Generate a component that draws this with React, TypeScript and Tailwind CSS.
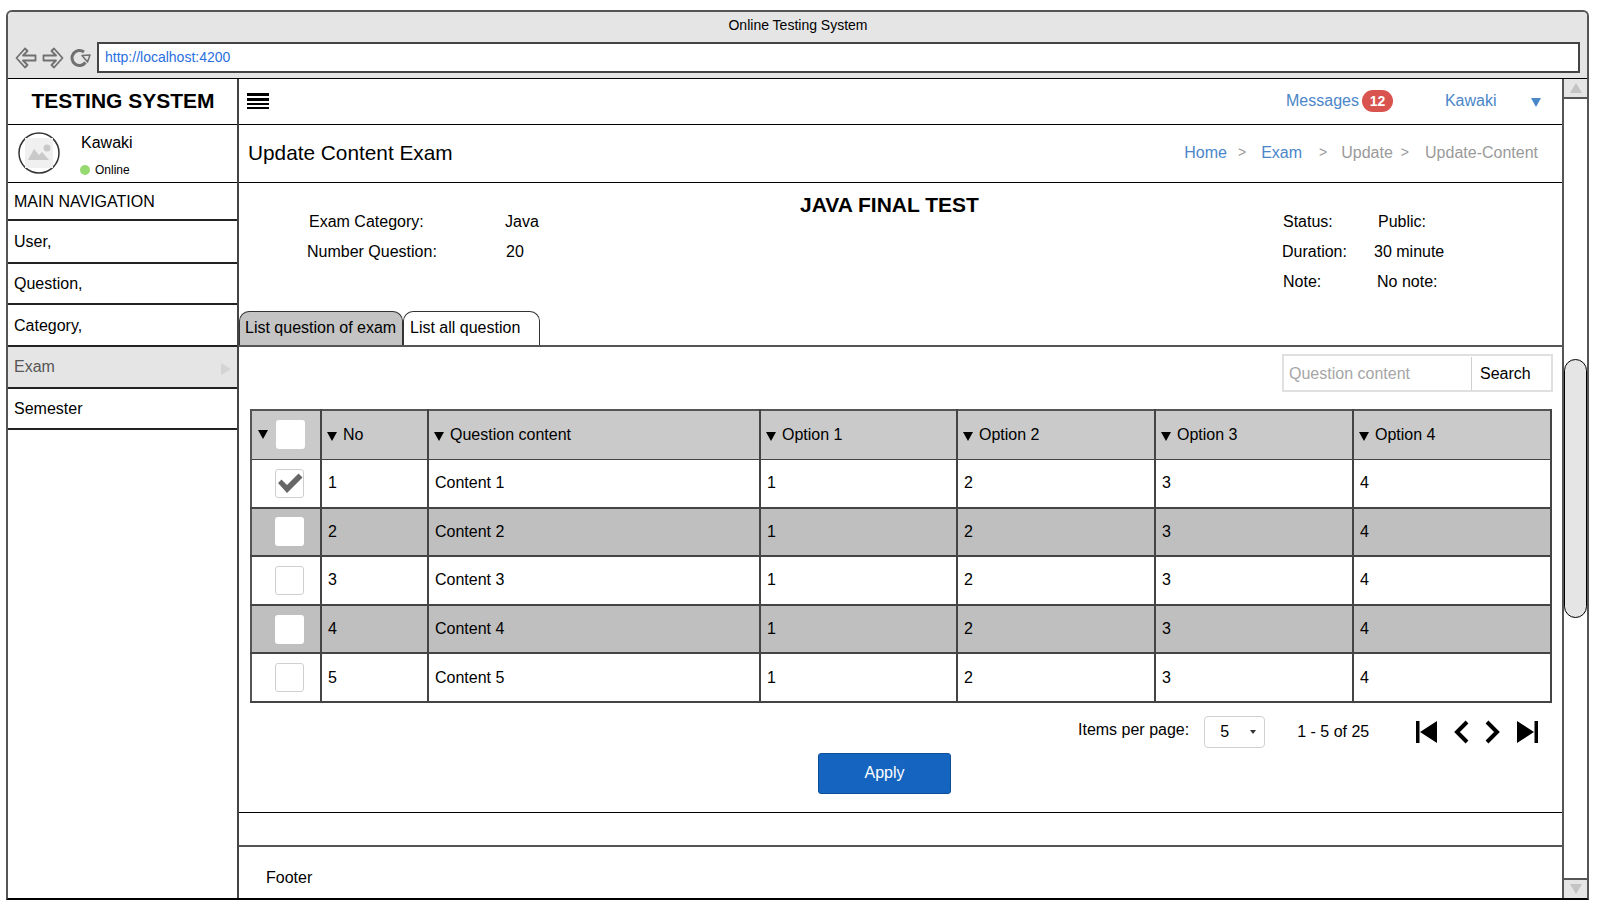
import React from 'react';

const sideItems = [
  { label: 'User,', h: 'h-[43px]' },
  { label: 'Question,', h: 'h-[41px]' },
  { label: 'Category,', h: 'h-[42px]' },
];
const rows = [1, 2, 3, 4, 5];
const headers = ['No', 'Question content', 'Option 1', 'Option 2', 'Option 3', 'Option 4'];

function Arrow({ flip }: { flip?: boolean }) {
  return (
    <svg width="22" height="22" viewBox="0 0 22 22" className={flip ? 'rotate-180' : ''}>
      <path d="M10 1.5 L1.5 11 L10 20.5 L12.5 18 L8 13.5 L20.5 13.5 L20.5 8.5 L8 8.5 L12.5 4 Z" fill="#e5e5e5" stroke="#707070" strokeWidth="1.8" strokeLinejoin="round" />
    </svg>
  );
}

function Caret() {
  return <span className="inline-block mr-[6px] w-0 h-0 border-x-[5px] border-x-transparent border-t-[9px] border-t-black align-[-1px]" />;
}

function CheckBox({ checked, bare }: { checked?: boolean; bare?: boolean }) {
  return (
    <span className={`flex items-center justify-center w-[29px] h-[29px] rounded-[3px] bg-white ${bare ? '' : 'border border-[#cfcfcf]'}`}>
      {checked && (
        <svg width="26" height="22" viewBox="0 0 26 22" className="shrink-0">
          <path d="M1 11 L4.5 7.5 L10 13 L21.5 1.5 L25.5 5.5 L10 21 Z" fill="#666" />
        </svg>
      )}
    </span>
  );
}

export default function App() {
  return (
    <div className="w-[1603px] h-[909px] bg-white pt-[10px] pl-[6px] overflow-hidden text-[16px] text-black [font-family:'Liberation_Sans',Arial,sans-serif]">
      <div className="w-[1583px] h-[890px] flex flex-col border-x-2 border-t-2 border-b-2 border-x-[#555] border-t-[#555] border-b-black rounded-t-[6px]">
        {/* browser chrome */}
        <div className="h-[66px] shrink-0 bg-[#e5e5e5] rounded-t-[5px] flex flex-col">
          <div className="h-[30px] flex items-center justify-center text-[14px] pb-[4px] pl-[1px]">Online Testing System</div>
          <div className="flex items-center pl-[7px] pr-[7px]">
            <div className="flex items-center gap-[5px] w-[82px]">
              <Arrow />
              <Arrow flip />
              <svg width="22" height="22" viewBox="0 0 22 22">
                <path d="M16.5 15.5 A7.5 7.5 0 1 1 15 5" fill="none" stroke="#707070" strokeWidth="3" />
                <path d="M13 8.5 L21 8 L18.5 15 Z" fill="#e5e5e5" stroke="#707070" strokeWidth="1.5" strokeLinejoin="round" />
              </svg>
            </div>
            <div className="flex-1 h-[31px] bg-white border-2 border-[#444] flex items-center pl-[6px] text-[14px] text-[#2a6fe0]">http://localhost:4200</div>
          </div>
        </div>

        <div className="flex flex-1 min-h-0 border-t border-black">
          {/* sidebar */}
          <aside className="w-[231px] shrink-0 border-r-2 border-[#444] flex flex-col">
            <div className="h-[46px] border-b border-black flex items-center justify-center text-[21px] font-bold pb-[2px] pl-[1px]">TESTING SYSTEM</div>
            <div className="h-[58px] border-b border-black flex pl-[10px] pt-[7px]">
              <svg width="42" height="42" viewBox="0 0 42 42">
                <circle cx="21" cy="21" r="20" fill="white" stroke="#333" strokeWidth="1.5" />
                <rect x="7" y="6" width="28" height="30" fill="#f0f0f0" />
                <circle cx="29" cy="16" r="3.5" fill="#c9c9c9" />
                <path d="M10 28 L16 17 L21 23 L24 20 L31 28 Z" fill="#c9c9c9" />
              </svg>
              <div className="ml-[20px] flex flex-col">
                <span className="leading-[20px] pl-[1px] pt-[1px]">Kawaki</span>
                <span className="mt-[10px] flex items-center text-[12px] leading-[14px]">
                  <span className="w-[10px] h-[10px] rounded-full bg-[#97d971] mr-[5px]" />
                  Online
                </span>
              </div>
            </div>
            <div className="h-[38px] border-b-2 border-[#222] flex items-center pl-[6px] pt-[1px]">MAIN NAVIGATION</div>
            {sideItems.map((item) => (
              <div key={item.label} className={`${item.h} border-b-2 border-[#222] flex items-center pl-[6px] pt-[1px]`}>{item.label}</div>
            ))}
            <div className="h-[42px] border-b-2 border-[#222] bg-[#e5e5e5] flex items-center justify-between pl-[6px] pr-[6px] text-[#555]">
              Exam
              <span className="w-0 h-0 border-y-[6px] border-y-transparent border-l-[10px] border-l-[#d4d4d4] mt-[3px]" />
            </div>
            <div className="h-[41px] border-b-2 border-[#222] flex items-center pl-[6px]">Semester</div>
          </aside>

          {/* main */}
          <main className="flex-1 min-w-0 flex flex-col">
            <div className="h-[46px] border-b border-black flex items-center pl-[8px] pb-[1px] text-[#4a86c8]">
              <div className="flex flex-col gap-[2px] w-[22px]">
                <span className="h-[3px] bg-black" />
                <span className="h-[3px] bg-black" />
                <span className="h-[2px] bg-black" />
                <span className="h-[2px] bg-black" />
              </div>
              <span className="ml-[1017px] -mt-[1px]">Messages</span>
              <span className="ml-[3px] w-[31px] h-[22px] rounded-full bg-[#d9534f] text-white font-bold text-[14px] flex items-center justify-center">12</span>
              <span className="ml-[52px]">Kawaki</span>
              <span className="ml-[34px] mt-[2px] w-0 h-0 border-x-[5px] border-x-transparent border-t-[9px] border-t-[#4a86c8]" />
            </div>
            <div className="h-[58px] border-b border-black flex items-center pl-[9px] pb-[2px]">
              <h1 className="text-[20.8px] font-normal">Update Content Exam</h1>
              <nav className="ml-auto mr-[24px] flex items-center text-[#9a9a9a]">
                <span className="text-[#4a86c8]">Home</span>
                <span className="ml-[11px] text-[14px]">&gt;</span>
                <span className="ml-[15px] text-[#4a86c8]">Exam</span>
                <span className="ml-[17px] text-[14px]">&gt;</span>
                <span className="ml-[14px]">Update</span>
                <span className="ml-[8px] text-[14px]">&gt;</span>
                <span className="ml-[16px]">Update-Content</span>
              </nav>
            </div>

            {/* exam info */}
            <div className="h-[128px] flex">
              <div className="w-[270px] pl-[68px] pt-[27px] grid grid-cols-[198px_auto] auto-rows-[30px] content-start">
                <span className="pl-[2px]">Exam Category:</span><span>Java</span>
                <span>Number Question:</span><span className="pl-[1px]">20</span>
              </div>
              <div className="flex-1 text-center text-[21px] font-bold pt-[6px] pl-[40px] pr-[52px]">JAVA FINAL TEST</div>
              <div className="w-[280px] pt-[27px] grid grid-cols-[92px_auto] auto-rows-[30px] content-start">
                <span className="pl-[1px]">Status:</span><span className="pl-[4px]">Public:</span>
                <span>Duration:</span><span>30 minute</span>
                <span className="pl-[1px]">Note:</span><span className="pl-[3px]">No note:</span>
              </div>
            </div>

            {/* tabs */}
            <div className="h-[36px] flex border-b-2 border-[#555]">
              <div className="w-[164px] bg-[#c4c4c4] border border-b-0 border-[#333] rounded-t-[10px] pl-[5px] pb-[2px] flex items-center">List question of exam</div>
              <div className="w-[137px] bg-white border border-b-0 border-[#333] rounded-t-[10px] pl-[6px] pb-[2px] flex items-center">List all question</div>
            </div>

            <div className="flex-1 flex flex-col pl-[11px]">
              <div className="mt-[7px] mr-[9px] self-end w-[271px] h-[38px] border-2 border-[#e0e0e0] flex items-center pt-[1px]">
                <span className="flex-1 pl-[5px] text-[#a6a6a6]">Question content</span>
                <span className="w-[80px] h-full border-l border-[#cfcfcf] flex items-center pl-[8px]">Search</span>
              </div>

              <table className="mt-[17px] w-[1300px] table-fixed border-collapse border-2 border-[#555]">
                <colgroup>
                  <col className="w-[70px]" />
                  <col className="w-[107px]" />
                  <col className="w-[332px]" />
                  <col className="w-[197px]" />
                  <col className="w-[198px]" />
                  <col className="w-[198px]" />
                  <col className="w-[198px]" />
                </colgroup>
                <thead>
                  <tr className="h-[49px] bg-[#cacaca]">
                    <th className="border-r-2 border-b border-[#444] font-normal text-left">
                      <div className="flex items-center pl-[6px]">
                        <Caret />
                        <span className="ml-[2px]"><CheckBox bare /></span>
                      </div>
                    </th>
                    {headers.map((h) => (
                      <th key={h} className="border-r-2 border-b border-[#444] font-normal text-left pl-[5px]"><Caret />{h}</th>
                    ))}
                  </tr>
                </thead>
                <tbody>
                  {rows.map((n) => (
                    <tr key={n} className={`h-[48.6px] border-b-2 border-[#444] ${n % 2 === 0 ? 'bg-[#bfbfbf]' : 'bg-white'}`}>
                      <td className="border-r-2 border-[#444] pl-[23px]"><CheckBox checked={n === 1} bare={n % 2 === 0} /></td>
                      <td className="border-r-2 border-[#444] pl-[6px]">{n}</td>
                      <td className="border-r-2 border-[#444] pl-[6px]">Content {n}</td>
                      <td className="border-r-2 border-[#444] pl-[6px]">1</td>
                      <td className="border-r-2 border-[#444] pl-[6px]">2</td>
                      <td className="border-r-2 border-[#444] pl-[6px]">3</td>
                      <td className="border-r-2 border-[#444] pl-[6px]">4</td>
                    </tr>
                  ))}
                </tbody>
              </table>

              {/* pagination */}
              <div className="mt-[13px] h-[32px] flex items-center pl-[828px]">
                <span className="-mt-[3px]">Items per page:</span>
                <div className="ml-[15px] w-[61px] h-[32px] border border-[#d0d0d0] rounded-[4px] flex items-center justify-between pl-[15px] pr-[8px]">
                  5
                  <span className="w-0 h-0 border-x-[3.5px] border-x-transparent border-t-[4px] border-t-[#333]" />
                </div>
                <span className="ml-[32px]">1 - 5 of 25</span>
                <div className="ml-[46px] flex items-center">
                  <svg width="24" height="24" viewBox="0 0 24 24"><path d="M1 1h3.5v22H1z M22 1v22L5 12z" fill="#000" /></svg>
                  <svg className="ml-[15px]" width="16" height="24" viewBox="0 0 16 24"><path d="M13 2 L3 12 L13 22" fill="none" stroke="#000" strokeWidth="4" /></svg>
                  <svg className="ml-[14px]" width="16" height="24" viewBox="0 0 16 24"><path d="M3 2 L13 12 L3 22" fill="none" stroke="#000" strokeWidth="4" /></svg>
                  <svg className="ml-[15px]" width="24" height="24" viewBox="0 0 24 24"><path d="M23 1h-3.5v22H23z M2 1v22L19 12z" fill="#000" /></svg>
                </div>
              </div>

              <div className="mt-[5px] ml-[568px] w-[133px] h-[41px] bg-[#1565c0] border border-[#0f4f9a] rounded-[3px] text-white flex items-center justify-center">Apply</div>
            </div>

            <div className="h-[33px] border-t border-black" />
            <div className="h-[53px] border-t-2 border-[#555] pl-[27px] pt-[22px] leading-[18px]">Footer</div>
          </main>

          {/* scrollbar */}
          <div className="w-[25px] shrink-0 border-l-2 border-[#555] flex flex-col justify-between">
            <div>
              <div className="h-[20px] bg-[#e5e5e5] border-b-2 border-[#555] flex items-center justify-center">
                <span className="w-0 h-0 border-x-[6px] border-x-transparent border-b-[10px] border-b-[#c4c4c4]" />
              </div>
              <div className="mt-[260px] h-[259px] bg-[#e5e5e5] border border-black rounded-[14px]" />
            </div>
            <div className="h-[20px] bg-[#e5e5e5] border-t-2 border-[#555] flex items-center justify-center">
              <span className="w-0 h-0 border-x-[6px] border-x-transparent border-t-[10px] border-t-[#c4c4c4]" />
            </div>
          </div>
        </div>
      </div>
    </div>
  );
}
